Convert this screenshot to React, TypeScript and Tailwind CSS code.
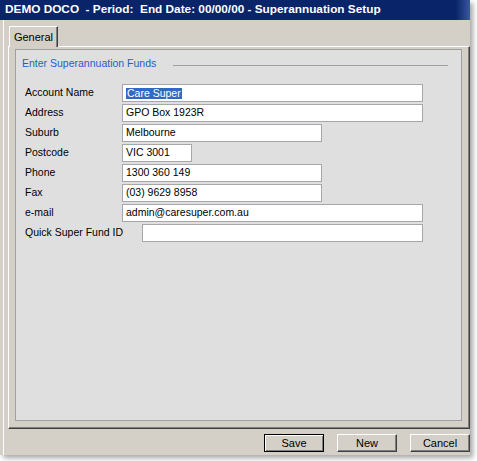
const FIELDS: { label: string; value: string; width: string; selected?: boolean }[] = [
  { label: 'Account Name', value: 'Care Super', width: 'w-[301px]', selected: true },
  { label: 'Address', value: 'GPO Box 1923R', width: 'w-[301px]' },
  { label: 'Suburb', value: 'Melbourne', width: 'w-[200px]' },
  { label: 'Postcode', value: 'VIC 3001', width: 'w-[70px]' },
  { label: 'Phone', value: '1300 360 149', width: 'w-[200px]' },
  { label: 'Fax', value: '(03) 9629 8958', width: 'w-[200px]' },
  { label: 'e-mail', value: 'admin@caresuper.com.au', width: 'w-[301px]' },
];

function Field({ value, width, selected }: { value: string; width: string; selected?: boolean }) {
  return (
    <div className={`${width} h-[18px] bg-white border border-[#a7a6aa] flex items-center pl-[3px] text-black`}>
      {selected ? <span className="bg-[#316ac5] text-white px-[1px] leading-[11px]">{value}</span> : <span>{value}</span>}
    </div>
  );
}

function Button({ label, primary }: { label: string; primary?: boolean }) {
  return (
    <button
      className={`w-[60px] h-[18px] flex items-center justify-center text-black bg-[#d4d0c8] ${
        primary
          ? 'border border-black shadow-[inset_1px_1px_0_#ffffff,inset_-1px_-1px_0_#808080]'
          : 'border-t border-l border-t-white border-l-white border-r border-b border-r-[#404040] border-b-[#404040] shadow-[inset_-1px_-1px_0_#808080]'
      }`}
    >
      {label}
    </button>
  );
}

export default function App() {
  return (
    <div className="w-[477px] h-[461px] bg-white font-['Liberation_Sans',Arial,sans-serif] text-[10.5px]">
      <div className="w-[470px] h-[455px] flex flex-col bg-[#d4d0c8] shadow-[3px_3px_5px_rgba(0,0,0,0.35)]">
        {/* Title bar */}
        <div className="h-[20px] bg-[linear-gradient(to_right,#0a246a_97%,#3a5a9a)] flex items-center pl-[5px] text-white font-bold text-[11.8px] whitespace-pre">
          {'DEMO DOCO  - Period:  End Date: 00/00/00 - Superannuation Setup'}
        </div>

        <div className="flex-1 flex flex-col border-l border-white ml-[3px]">
          {/* Tabs */}
          <div className="h-[26px] flex items-end pl-[5px]">
            <div className="w-[49px] h-[21px] border-t border-l border-white border-r border-r-[#404040] shadow-[inset_-1px_0_0_#808080] flex items-center justify-center text-black text-[11px] -mb-[1px] relative z-10 bg-[#d4d0c8]">
              General
            </div>
          </div>

          {/* Tab panel */}
          <div className="ml-[4px] w-[462px] h-[383px] border-t border-l border-white border-r border-b border-r-[#404040] border-b-[#404040] shadow-[inset_-1px_-1px_0_#808080] pt-[2px] pl-[6px] pr-[7px] pb-[7px] flex">
            <div className="flex-1 bg-[#dfdfdf] border border-[#a0a0a0] flex flex-col">
              <div className="flex items-center pl-[6px] pr-[13px] mt-[7px] h-[14px]">
                <span className="text-[#1d5fcb] text-[10.5px]">Enter Superannuation Funds</span>
                <div className="flex-1 ml-[17px] h-[1px] bg-[#a0a0a0] mt-[3px]" />
              </div>

              <div className="flex flex-col gap-[2px] pl-[9px] mt-[13px]">
                {FIELDS.map((f) => (
                  <div key={f.label} className="flex items-center h-[18px]">
                    <span className="w-[97px] text-black">{f.label}</span>
                    <Field value={f.value} width={f.width} selected={f.selected} />
                  </div>
                ))}
                <div className="flex items-center h-[18px]">
                  <span className="w-[117px] text-black">Quick Super Fund ID</span>
                  <Field value="" width="w-[281px]" />
                </div>
              </div>
            </div>
          </div>

          {/* Buttons */}
          <div className="flex justify-end gap-[13px] mt-[5px] text-[11px]">
            <Button label="Save" primary />
            <Button label="New" />
            <Button label="Cancel" />
          </div>
        </div>
      </div>
    </div>
  );
}
